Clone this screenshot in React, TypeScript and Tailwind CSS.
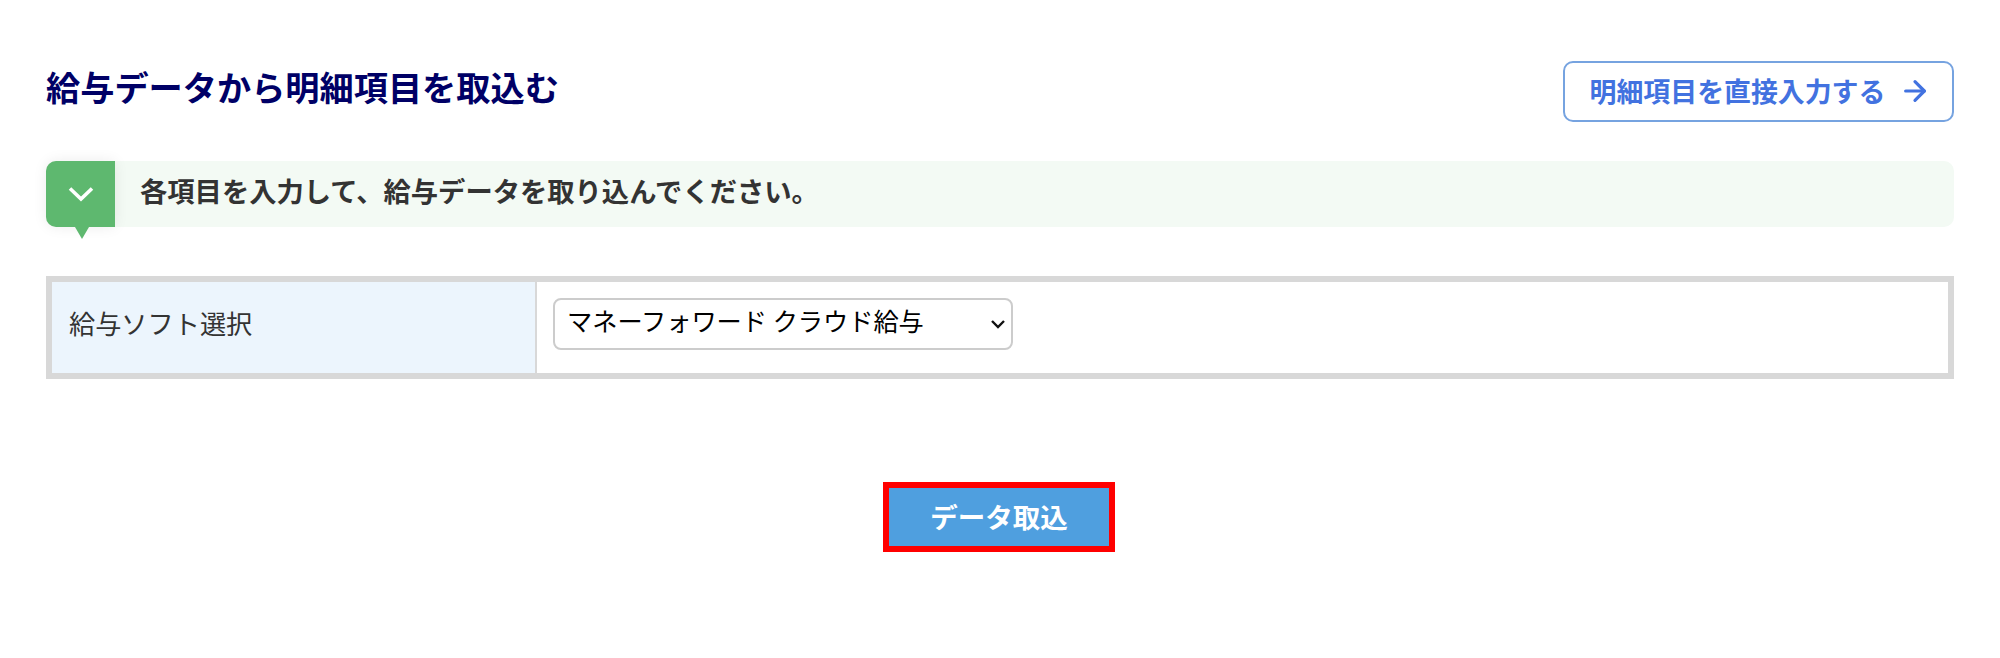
import { ArrowRight } from "lucide-react";

const Notice = () => {
  return (
    <div className="mt-[39px] flex h-[66px] items-center rounded-[10px] bg-[#f3faf4]">
      <div className="relative flex h-[66px] w-[69px] shrink-0 items-center justify-center rounded-l-[10px] bg-[#5eb86f] shadow-[0_0_14px_rgba(0,0,0,0.08)]">
        <svg width="26" height="16" viewBox="0 0 26 16" fill="none">
          <path d="M2 2.5 L13 13 L24 2.5" stroke="#fff" strokeWidth="3.6" />
        </svg>
        <span className="absolute left-[29px] top-[66px] h-0 w-0 border-x-[7px] border-t-[12px] border-x-transparent border-t-[#5eb86f]" />
      </div>
      <p className="ml-[25px] pb-[8px] text-[27.3px] font-bold text-[#333]">
        各項目を入力して、給与データを取り込んでください。
      </p>
    </div>
  );
};

export default function App() {
  return (
    <main
      className="min-h-[658px] bg-white px-[46px] pt-[61px]"
      style={{ fontFamily: '"Noto Sans CJK JP", sans-serif' }}
    >
      <header className="flex items-start justify-between">
        <h1 className="text-[34.2px] leading-[50px] font-bold text-[#000066]">
          給与データから明細項目を取込む
        </h1>
        <a className="flex h-[61px] w-[391px] items-center justify-center gap-[14px] rounded-[10px] border-2 border-[#76a3e0] pb-px pl-[4px] text-[26.9px] font-bold text-[#4272e0]">
          明細項目を直接入力する
          <ArrowRight size={32} strokeWidth={2.4} />
        </a>
      </header>

      <Notice />

      <div className="mt-[49px] flex h-[103px] border-[6px] border-[#d8d8d8]">
        <div className="flex w-[485px] items-center border-r-2 border-[#d8d8d8] bg-[#ecf5fd] pb-[8px] pl-[17px] text-[26.2px] text-[#333]">
          給与ソフト選択
        </div>
        <div className="flex flex-1 items-center pb-[8px] pl-[16px]">
          <div className="relative">
            <select className="block h-[52px] w-[460px] appearance-none rounded-[8px] border-2 border-[#ccc] bg-white pb-[5px] pl-[12px] text-[25.2px] text-black">
              <option>マネーフォワード クラウド給与</option>
            </select>
            <svg
              className="pointer-events-none absolute right-[7px] top-[21px]"
              width="16"
              height="10"
              viewBox="0 0 16 10"
              fill="none"
            >
              <path d="M2 2 L8 8 L14 2" stroke="#111" strokeWidth="2.4" />
            </svg>
          </div>
        </div>
      </div>

      <div className="mt-[103px] flex justify-center pr-[2px]">
        <button className="h-[70px] w-[232px] border-[6px] border-[#ff0000] bg-[#4f9fdf] text-[27.5px] font-bold text-white">
          データ取込
        </button>
      </div>
    </main>
  );
}
